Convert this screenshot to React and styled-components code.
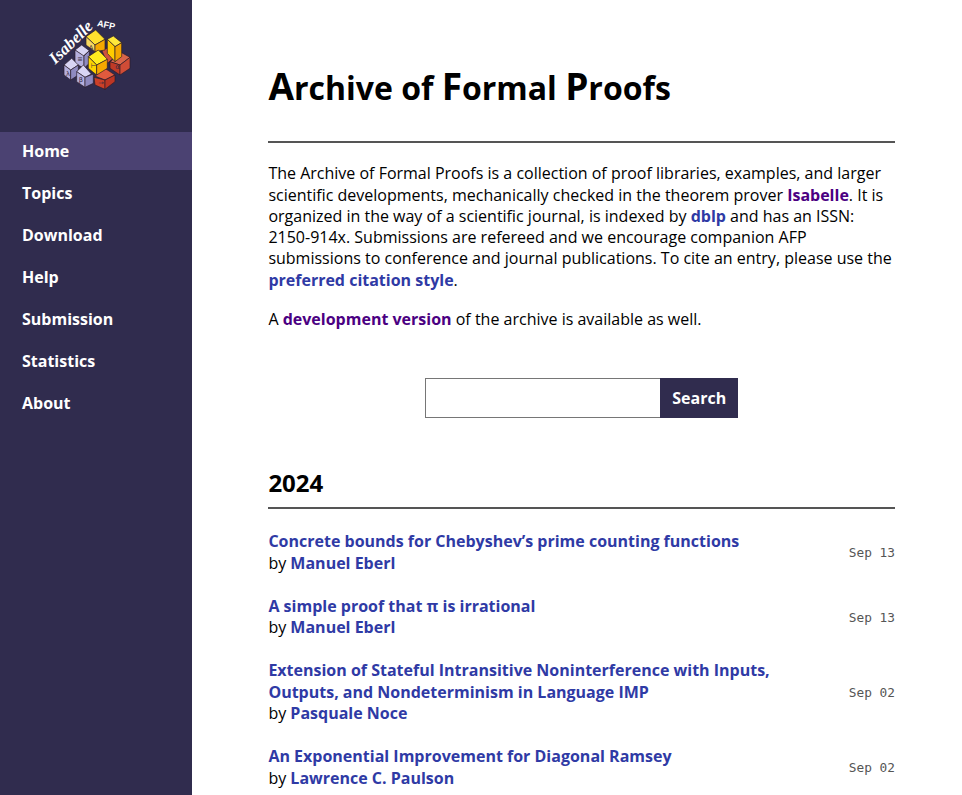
import React from 'react';
import styled, { createGlobalStyle } from 'styled-components';

const GlobalStyle = createGlobalStyle`
  html, body {
    margin: 0;
    padding: 0;
    height: 100%;
    overflow: hidden;
    background: #fff;
  }
  body {
    font-family: 'Open Sans', sans-serif;
    font-size: 16px;
    line-height: 21.28px;
    color: #000;
  }
`;

const Page = styled.div`
  display: flex;
  height: 795px;
  overflow: hidden;
`;

const Sidebar = styled.nav`
  flex: 0 0 192px;
  background-color: #302c4e;
`;

const LogoBox = styled.div`
  height: 132px;
  padding-left: 30px;
  box-sizing: border-box;
`;

const NavItem = styled.a`
  display: block;
  height: 38px;
  margin-bottom: 4px;
  padding-left: 22px;
  line-height: 38px;
  font-weight: 700;
  font-size: 16px;
  color: #fff;
  background-color: ${(p) => (p.$active ? '#4b4272' : 'transparent')};
`;

const Main = styled.main`
  flex: 1;
  padding: 0 67px 0 76.4px;
  min-width: 0;
`;

const Title = styled.h1`
  margin: 0;
  padding-top: 63px;
  padding-bottom: 30px;
  border-bottom: 2px solid #555;
  font-size: 32px;
  line-height: 46px;
  font-weight: 700;
`;

const BigCap = styled.span`
  font-size: 37px;
`;

const Para = styled.p`
  margin: ${(p) => p.$top || '0'} 0 0;
`;

const IsabelleLink = styled.a`
  font-weight: 700;
  color: #4b0082;
`;

const BlueLink = styled.a`
  font-weight: 700;
  color: #2f3aa5;
`;

const SearchForm = styled.form`
  display: flex;
  justify-content: center;
  margin-top: 48px;
`;

const SearchInput = styled.input`
  width: 235px;
  height: 40px;
  box-sizing: border-box;
  border: 1px solid #767676;
  border-right: none;
  background: #fff;
  padding: 0;
`;

const SearchButton = styled.button`
  width: 78px;
  height: 40px;
  border: none;
  padding: 0;
  background-color: #302c4e;
  color: #fff;
  font-family: 'Open Sans', sans-serif;
  font-weight: 700;
  font-size: 16px;
`;

const YearHeading = styled.h2`
  margin: 48px 0 0;
  padding-bottom: 8px;
  border-bottom: 2px solid #555;
  font-size: 24px;
  line-height: 33px;
  font-weight: 700;
`;

const EntryList = styled.div`
  margin-top: 22px;
  display: flex;
  flex-direction: column;
  gap: 22px;
`;

const Entry = styled.div`
  display: flex;
  align-items: center;
  justify-content: space-between;
`;

const EntryText = styled.div`
  max-width: 540px;
`;

const EntryTitle = styled.a`
  display: block;
  font-weight: 700;
  color: #2f3aa5;
`;

const EntryDate = styled.span`
  font-family: 'DejaVu Sans Mono', monospace;
  font-size: 12.8px;
  color: #555;
  white-space: pre;
`;

// faces of the logo cubes, back to front, in a 360x330 drawing
const logoFaces = [
  ['#d0523c', '215,150 245,140 262,165 232,190'],
  ['#d8654a', '240,185 275,158 300,172 270,195'],
  ['#c03a26', '240,185 270,195 270,225 240,205'],
  ['#d04c36', '270,195 300,172 300,205 270,225'],
  ['#e05a3e', '195,228 225,205 255,225 225,240'],
  ['#cc4028', '192,232 225,240 225,268 195,255'],
  ['#bc3624', '225,240 255,225 255,245 225,268'],
  ['#d8d4f4', '135,150 155,135 178,152 160,168'],
  ['#b5b0de', '135,150 162,168 162,205 135,190'],
  ['#8f8ac0', '162,168 178,152 178,190 162,205'],
  ['#d8d4f4', '102,195 125,175 145,195 122,210'],
  ['#b5b0de', '102,195 122,210 122,240 102,225'],
  ['#8f8ac0', '122,210 145,195 145,225 122,240'],
  ['#d8d4f4', '140,215 160,195 184,222 165,232'],
  ['#b5b0de', '140,215 165,232 165,262 140,245'],
  ['#8f8ac0', '165,232 190,222 190,250 165,262'],
  ['#ffe83a', '232,118 250,108 275,128 255,140'],
  ['#ffcc00', '232,118 255,140 255,185 232,160'],
  ['#f5a800', '255,140 275,128 275,170 255,185'],
  ['#ffe02e', '168,110 197,90 225,118 195,135'],
  ['#f8d860', '168,110 195,135 195,155 168,135'],
  ['#f5a800', '195,135 225,118 225,150 195,155'],
  ['#ffec1f', '175,170 205,150 232,178 200,195'],
  ['#ffd400', '175,170 200,195 200,225 175,205'],
  ['#f5a800', '200,195 232,178 232,205 200,225'],
];

const logoGlyphs = [
  ['Α', 176, 150],
  ['≡', 142, 184],
  ['λ', 108, 229],
  ['β', 146, 246],
  ['⊢', 182, 205],
  ['→', 205, 254],
  ['α', 256, 208],
];

function Logo() {
  return (
    <svg width="120" height="110" viewBox="0 0 360 330">
      {logoFaces.map(([fill, points]) => (
        <polygon key={points} points={points} fill={fill} stroke="#2a1c28" strokeWidth="2" />
      ))}
      {logoGlyphs.map(([glyph, x, y]) => (
        <text key={glyph} x={x} y={y} fill="#3a2a40" fontFamily="DejaVu Sans, sans-serif" fontSize="20">{glyph}</text>
      ))}
      <text fill="#fff" fontFamily="Liberation Serif, serif" fontStyle="italic" fontWeight="700" fontSize="50" transform="translate(76 194) rotate(-44)">Isabelle</text>
      <text fill="#fff" fontFamily="Liberation Sans, sans-serif" fontWeight="700" fontSize="27" transform="translate(200 78) rotate(12)">AFP</text>
    </svg>
  );
}

const entries = [
  { title: 'Concrete bounds for Chebyshev’s prime counting functions', author: 'Manuel Eberl', date: 'Sep 13' },
  { title: 'A simple proof that π is irrational', author: 'Manuel Eberl', date: 'Sep 13' },
  { title: 'Extension of Stateful Intransitive Noninterference with Inputs, Outputs, and Nondeterminism in Language IMP', author: 'Pasquale Noce', date: 'Sep 02' },
  { title: 'An Exponential Improvement for Diagonal Ramsey', author: 'Lawrence C. Paulson', date: 'Sep 02' },
];

const navItems = ['Home', 'Topics', 'Download', 'Help', 'Submission', 'Statistics', 'About'];

export default function App() {
  return (
    <Page>
      <GlobalStyle />
      <Sidebar>
        <LogoBox>
          <Logo />
        </LogoBox>
        {navItems.map((item, i) => (
          <NavItem key={item} $active={i === 0}>{item}</NavItem>
        ))}
      </Sidebar>
      <Main>
        <Title>
          <BigCap>A</BigCap>rchive of <BigCap>F</BigCap>ormal <BigCap>P</BigCap>roofs
        </Title>
        <Para $top="20.35px">
          The Archive of Formal Proofs is a collection of proof libraries, examples, and larger scientific developments, mechanically checked in the theorem prover <IsabelleLink>Isabelle</IsabelleLink>. It is organized in the way of a scientific journal, is indexed by <BlueLink>dblp</BlueLink> and has an ISSN: 2150-914x. Submissions are refereed and we encourage companion AFP submissions to conference and journal publications. To cite an entry, please use the <BlueLink>preferred citation style</BlueLink>.
        </Para>
        <Para $top="18px">
          A <IsabelleLink>development version</IsabelleLink> of the archive is available as well.
        </Para>
        <SearchForm onSubmit={(e) => e.preventDefault()}>
          <SearchInput type="text" />
          <SearchButton type="button">Search</SearchButton>
        </SearchForm>
        <YearHeading>2024</YearHeading>
        <EntryList>
          {entries.map((entry) => (
            <Entry key={entry.title}>
              <EntryText>
                <EntryTitle>{entry.title}</EntryTitle>
                by <BlueLink>{entry.author}</BlueLink>
              </EntryText>
              <EntryDate>{entry.date}</EntryDate>
            </Entry>
          ))}
        </EntryList>
      </Main>
    </Page>
  );
}
